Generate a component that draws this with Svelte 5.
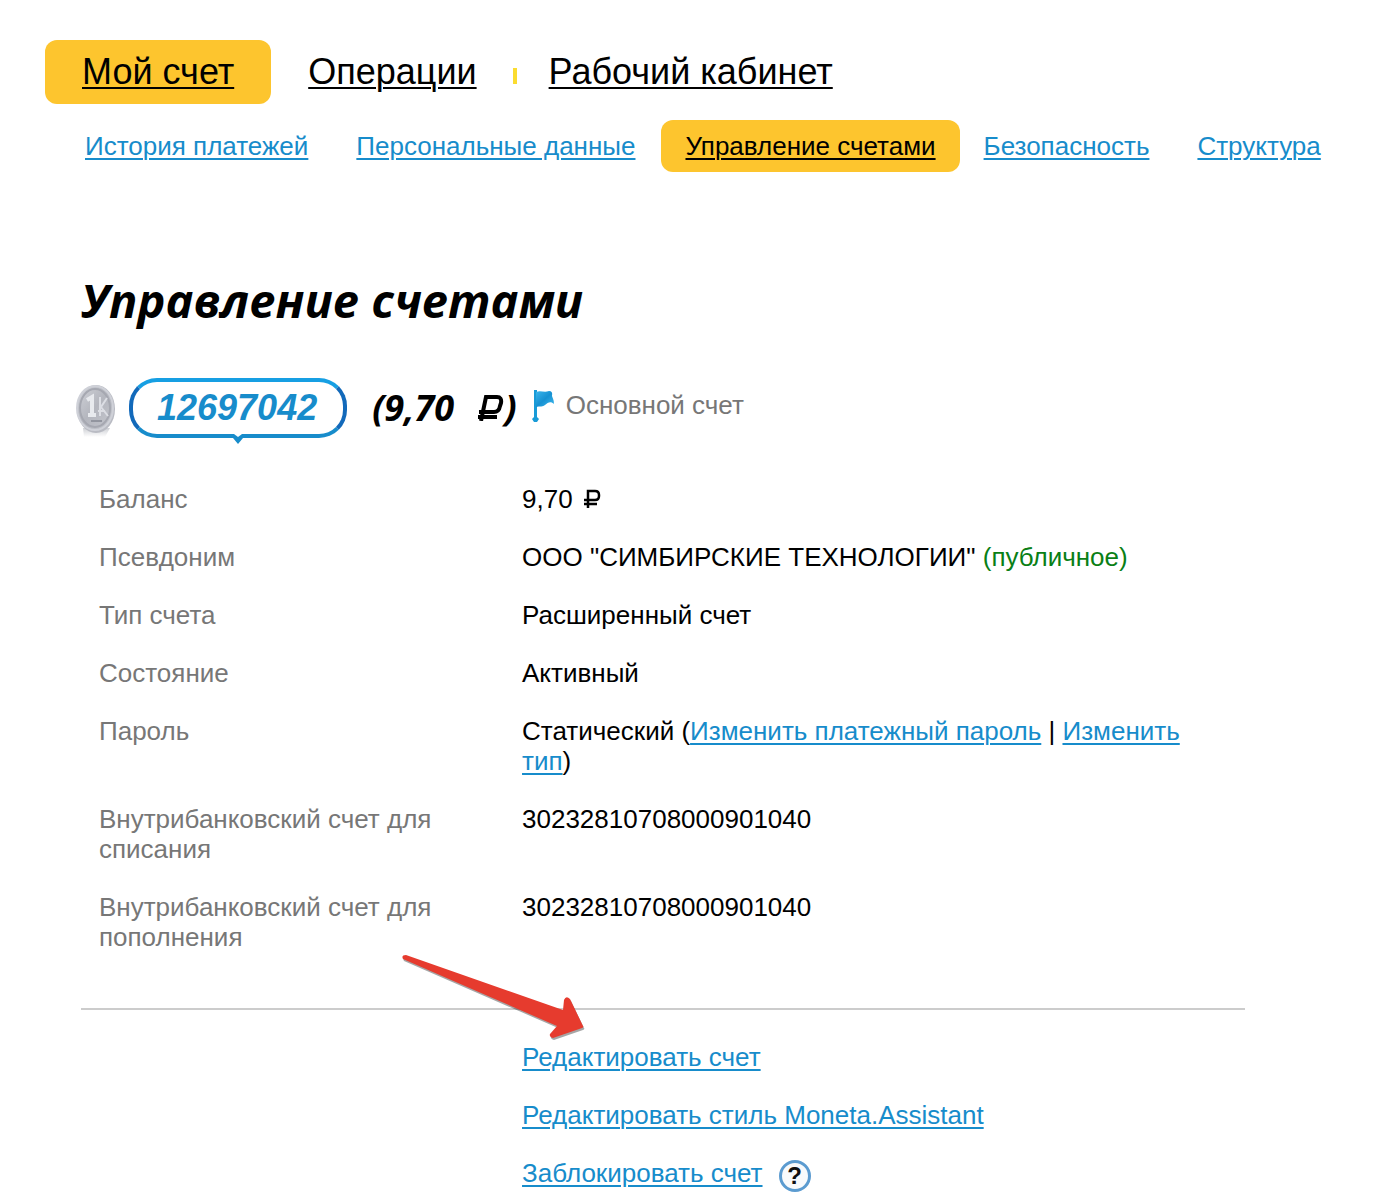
<script>
  const sections = ['История платежей', 'Персональные данные', 'Управление счетами', 'Безопасность', 'Структура'];
  const current = 'Управление счетами';
  const bankAccount = '30232810708000901040';
</script>

<div class="page">
  <header>
    <nav class="main-nav" aria-label="Разделы">
      <a class="active" href="#account">Мой счет</a>
      <a href="#operations">Операции</a>
      <span class="divider"></span>
      <a href="#office">Рабочий кабинет</a>
    </nav>
    <nav class="sub-nav" aria-label="Мой счет">
      {#each sections as section}
        <a class:active={section === current} href="#section">{section}</a>
      {/each}
    </nav>
  </header>

  <main>
    <h1>Управление счетами</h1>

    <div class="account">
      <svg class="coin" viewBox="0 0 40 54" aria-hidden="true">
        <defs>
          <linearGradient id="coinFace" x1="0" y1="0" x2="1" y2="1">
            <stop offset="0" stop-color="#d2d4da" />
            <stop offset="0.5" stop-color="#b4b6be" />
            <stop offset="1" stop-color="#c6c8cf" />
          </linearGradient>
          <linearGradient id="coinShade" x1="0" y1="0" x2="0" y2="1">
            <stop offset="0" stop-color="#aeb1b9" />
            <stop offset="1" stop-color="#ffffff" />
          </linearGradient>
        </defs>
        <path d="M7 44h27l-5 9H8z" fill="url(#coinShade)" opacity="0.6" />
        <ellipse cx="20" cy="25" rx="19" ry="24" fill="#b9bbc3" />
        <ellipse cx="19" cy="24" rx="18" ry="22" fill="url(#coinFace)" stroke="#cfd1d8" stroke-width="2" />
        <ellipse cx="19" cy="24" rx="15" ry="19" fill="none" stroke="#a6a8b1" stroke-width="2" />
        <path d="M11 16l5-3v17M12 31h8" fill="none" stroke="#e8eaee" stroke-width="4" />
        <path d="M24 13v19M31 14l-6 9 7 9M22 27h7" fill="none" stroke="#dcdee4" stroke-width="2" />
        <path d="M15 37h11" stroke="#92959f" stroke-width="2" />
      </svg>
      <a class="number" href="#12697042">
        12697042
        <svg class="tail" viewBox="0 0 16 12" aria-hidden="true">
          <path d="M0 0h16v3q-2 0-3 1l-5 6-5-6Q2 3 0 3z" fill="#178ccb" />
          <path d="M4 0h8L8 3z" fill="#fff" />
        </svg>
      </a>
      <strong class="amount">(9,70
        <svg class="ruble" viewBox="0 0 28 28" role="img" aria-label="₽">
          <path d="M5 28L10 4h11q5 0 4 6l-1 3q-1 6-6 6H3M2 24h19" fill="none" stroke="#000" stroke-width="4" />
        </svg>)</strong>
      <svg class="flag" viewBox="0 0 24 34" aria-hidden="true">
        <defs>
          <linearGradient id="flagFill" x1="0" y1="0" x2="1" y2="1">
            <stop offset="0" stop-color="#3ab5ec" />
            <stop offset="0.5" stop-color="#1691d2" />
            <stop offset="1" stop-color="#40b9ed" />
          </linearGradient>
        </defs>
        <path d="M2 1h3v27l2 2-2 3H2l-2-3 2-2z" fill="#199bd7" />
        <path d="M4 3c5-2 8 1 13-1q4 0 3 5c1 3 2 4 2 8-3-3-6-2-9 1-2 2-5 1-9 2z" fill="url(#flagFill)" />
      </svg>
      <span class="kind">Основной счет</span>
    </div>

    <table>
      <tbody>
        <tr>
          <th scope="row">Баланс</th>
          <td>9,70
            <svg class="ruble small" viewBox="0 0 18 19" role="img" aria-label="₽">
              <path d="M5 19V2h7q4 0 4 4v1q0 4-4 4H1M1 15h13" fill="none" stroke="#000" stroke-width="2.5" />
            </svg>
          </td>
        </tr>
        <tr>
          <th scope="row">Псевдоним</th>
          <td>ООО "СИМБИРСКИЕ ТЕХНОЛОГИИ" <span class="public">(публичное)</span></td>
        </tr>
        <tr><th scope="row">Тип счета</th><td>Расширенный счет</td></tr>
        <tr><th scope="row">Состояние</th><td>Активный</td></tr>
        <tr>
          <th scope="row">Пароль</th>
          <td>Статический (<a href="#password">Изменить платежный пароль</a> | <a href="#type">Изменить тип</a>)</td>
        </tr>
        <tr><th scope="row">Внутрибанковский счет для списания</th><td>{bankAccount}</td></tr>
        <tr><th scope="row">Внутрибанковский счет для пополнения</th><td>{bankAccount}</td></tr>
      </tbody>
    </table>

    <div class="actions">
      <svg class="arrow" viewBox="0 0 190 96" aria-hidden="true">
        <defs>
          <path id="pointer" d="M3 5Q1 1 6 1L163 56l1-10q2-5 6-1l13 27q1 1-1 2l-29 10q-4-1-3-4l7-8Q90 43 3 5z" />
        </defs>
        <use class="shadow" href="#pointer" x="1" y="2" />
        <use href="#pointer" fill="#e63b2e" />
      </svg>
      <a href="#edit">Редактировать счет</a>
      <a href="#style">Редактировать стиль Moneta.Assistant</a>
      <div class="with-help">
        <a href="#block">Заблокировать счет</a>
        <button type="button" aria-label="Справка">?</button>
      </div>
    </div>
  </main>
</div>

<style>
  :global(body) {
    margin: 0;
    background: #fff;
  }

  .page {
    padding-top: 40px;
    font: 26px/30px "Liberation Sans", Arial, sans-serif;
    color: #000;
  }

  a {
    color: #178ccb;
    text-decoration: underline;
    text-decoration-thickness: 2px;
    text-underline-offset: 3px;
  }

  .main-nav,
  .sub-nav {
    display: flex;
    align-items: center;
    white-space: nowrap;
  }

  .main-nav {
    padding-left: 45px;
    font-size: 36px;
    line-height: 64px;
  }

  .main-nav a {
    color: #000;
  }

  .main-nav .active {
    margin-right: 37px;
    padding: 0 37px;
  }

  .active {
    border-radius: 12px;
    background: #fdc52e;
  }

  .divider {
    width: 4px;
    height: 16px;
    margin: 8px 32px 0 36px;
    background: #fbdc30;
  }

  .sub-nav {
    gap: 2px;
    margin-top: 16px;
    padding-left: 63px;
    line-height: 52px;
  }

  .sub-nav a {
    padding: 0 24px 0 22px;
  }

  .sub-nav .active {
    padding: 0 24px;
    color: #000;
  }

  main {
    margin: 96px 133px 0 81px;
  }

  h1 {
    margin: 0;
    font: italic bold 47px/64px "Trebuchet MS", "Open Sans", sans-serif;
  }

  .account {
    display: flex;
    align-items: center;
    margin: 46px 0 32px -5px;
  }

  .coin {
    width: 40px;
    height: 54px;
    margin: 6px 13px 0 0;
  }

  .number {
    position: relative;
    box-sizing: border-box;
    height: 60px;
    padding: 0 26px 0 24px;
    border: 4px solid #178ccb;
    border-top-color: #169fe3;
    border-left-color: #1269ba;
    border-right-color: #1269ba;
    border-radius: 28px;
    font: italic bold 36px/52px "Liberation Sans", Arial, sans-serif;
    text-decoration: none;
  }

  .tail {
    position: absolute;
    top: 100%;
    left: 50%;
    width: 16px;
    height: 12px;
    margin-left: -8px;
  }

  .amount {
    margin-left: 25px;
    font: italic bold 36px/60px "Trebuchet MS", "Open Sans", sans-serif;
    white-space: nowrap;
  }

  .ruble {
    width: 28px;
    height: 28px;
    margin-left: 13px;
  }

  .ruble.small {
    width: 18px;
    height: 19px;
    margin-left: 3px;
  }

  .flag {
    width: 24px;
    height: 34px;
    margin: 0 10px 4px 15px;
  }

  .kind {
    padding-bottom: 6px;
    color: #777;
  }

  table {
    width: 100%;
    border-collapse: collapse;
    table-layout: fixed;
  }

  th,
  td {
    box-sizing: border-box;
    padding: 14px 18px;
    font-weight: normal;
    text-align: left;
    vertical-align: top;
  }

  th {
    width: 36%;
    color: #777;
  }

  td {
    padding-left: 22px;
  }

  .public {
    color: #0a7f16;
  }

  .actions {
    position: relative;
    display: grid;
    grid-template-columns: 36% 64%;
    row-gap: 28px;
    margin-top: 42px;
    padding: 32px 0 14px;
    border-top: 2px solid #ccc;
  }

  .actions > a,
  .with-help {
    grid-column: 2;
    justify-self: start;
    margin-left: 22px;
  }

  .with-help {
    display: flex;
    align-items: center;
    gap: 16px;
    height: 30px;
  }

  button {
    width: 32px;
    height: 32px;
    margin-top: 6px;
    padding: 0;
    border: 3px solid #5b9bd0;
    border-radius: 50%;
    background: #f8fafc;
    color: #111;
    font: bold 24px/26px "Liberation Sans", Arial, sans-serif;
  }

  .arrow {
    position: absolute;
    top: -56px;
    left: 319px;
    width: 190px;
    height: 96px;
  }

  .shadow {
    fill: #000;
    opacity: 0.35;
  }
</style>
